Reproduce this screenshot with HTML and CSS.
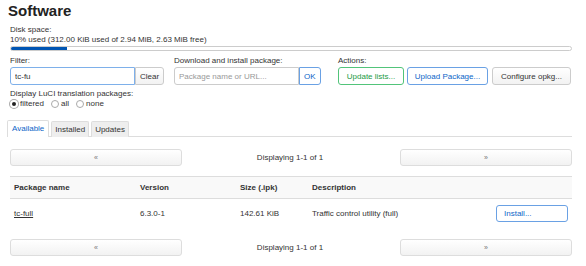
FILE: index.html
```html
<!DOCTYPE html>
<html lang="en">
<head>
    <meta charset="UTF-8">
    <title>Software</title>
    <link rel="stylesheet" href="styles.css">
</head>
<body>
    <div class="page">
        <h1>Software</h1>
        <div class="disk">
            <div>Disk space:</div>
            <div>10% used (312.00 KiB used of 2.94 MiB, 2.63 MiB free)</div>
            <div class="bar"><div class="bar-fill" style="width: 10%"></div></div>
        </div>

        <div class="controls">
            <div class="control filter">
                <label>Filter:</label>
                <div class="input-group">
                    <input type="text" value="tc-fu" class="focus">
                    <button class="btn">Clear</button>
                </div>
            </div>
            <div class="control download">
                <label>Download and install package:</label>
                <div class="input-group">
                    <input type="text" placeholder="Package name or URL...">
                    <button class="btn btn-blue">OK</button>
                </div>
            </div>
            <div class="control actions">
                <label>Actions:</label>
                <div class="button-group">
                    <button class="btn btn-green w-update">Update lists...</button>
                    <button class="btn btn-blue w-upload">Upload Package...</button>
                    <button class="btn w-config">Configure opkg...</button>
                </div>
            </div>
        </div>

        <div class="lang">
            <div>Display LuCI translation packages:</div>
            <div class="radios">
                <span class="radio checked"></span><span class="opt">filtered</span>
                <span class="radio"></span><span class="opt">all</span>
                <span class="radio"></span><span class="opt">none</span>
            </div>
        </div>

        <ul class="tabs">
            <li class="active">Available</li>
            <li>Installed</li>
            <li>Updates</li>
        </ul>

        <div class="pager">
            <button class="btn">&laquo;</button>
            <span>Displaying 1-1 of 1</span>
            <button class="btn">&raquo;</button>
        </div>

        <table class="packages">
            <tr>
                <th class="c-name">Package name</th>
                <th class="c-ver">Version</th>
                <th class="c-size">Size (.ipk)</th>
                <th class="c-desc">Description</th>
                <th></th>
            </tr>
            <tr>
                <td><a href="#">tc-full</a></td>
                <td>6.3.0-1</td>
                <td>142.61 KiB</td>
                <td>Traffic control utility (full)</td>
                <td class="c-btn"><button class="btn btn-blue install">Install...</button></td>
            </tr>
        </table>

        <div class="pager">
            <button class="btn">&laquo;</button>
            <span>Displaying 1-1 of 1</span>
            <button class="btn">&raquo;</button>
        </div>
    </div>
</body>
</html>
```

FILE: styles.css
```css
body {
    margin: 0;
    font-family: "Liberation Sans", Arial, sans-serif;
    font-size: 8px;
    color: #333;
    background: #fff;
}
.page {
    width: 562px;
    padding: 0 14px 0 10px;
}
h1 {
    font-size: 15px;
    font-weight: bold;
    color: #222;
    margin: 0 0 0 -2px;
    height: 25px;
    line-height: 21px;
}
.disk {
    line-height: 10px;
}
.bar {
    height: 3px;
    margin-top: 1px;
    border: 1px solid #ccc;
    border-radius: 3px;
    background: #fff;
    overflow: hidden;
}
.bar-fill {
    height: 100%;
    background: #0055b3;
}
.controls {
    display: flex;
    margin-top: 5px;
}
.control label {
    display: block;
    height: 10px;
    line-height: 10px;
    margin-bottom: 1px;
}
.filter { width: 164px; }
.download { width: 164px; }
.input-group {
    display: flex;
    height: 18px;
}
input {
    font-family: inherit;
    font-size: 8px;
    width: 125px;
    box-sizing: border-box;
    height: 18px;
    padding: 0 4px;
    border: 1px solid #ccc;
    border-radius: 3px 0 0 3px;
    color: #333;
}
input::placeholder { color: #999; }
input.focus { border-color: #7eb0ea; }
.btn {
    font-family: inherit;
    font-size: 8px;
    height: 18px;
    padding: 0 4px;
    background: linear-gradient(#fff, #f2f2f2);
    border: 1px solid #ccc;
    border-radius: 3px;
    color: #333;
    white-space: nowrap;
}
.input-group .btn {
    border-radius: 0 3px 3px 0;
    margin-left: 0;
}
.btn-blue {
    border-color: #6aa1e4;
    color: #0c65c8;
    background: #fff;
}
.btn-green {
    border-color: #52c47a;
    color: #1b9b45;
    background: #fff;
}
.button-group {
    display: flex;
    gap: 3px;
}
.w-update { width: 66px; }
.w-upload { width: 81px; }
.w-config { width: 79px; margin-left: 1px; }
.lang {
    margin-top: 4px;
    line-height: 10px;
}
.radios {
    display: flex;
    align-items: center;
}
.radio {
    display: inline-block;
    width: 8px;
    height: 8px;
    border: 1px solid #aaa;
    border-radius: 50%;
    box-sizing: border-box;
    margin: 0 2px 0 7px;
}
.radio:first-child { margin-left: 0; }
.radio.checked {
    border: 2px solid #fff;
    background: #222;
    box-shadow: 0 0 0 1px #aaa;
}
.tabs {
    list-style: none;
    margin: 11px 0 0 -3px;
    padding: 0;
    display: flex;
    gap: 2px;
    border-bottom: 1px solid #ddd;
    height: 16px;
}
.tabs li {
    height: 15px;
    line-height: 15px;
    padding: 0 3px;
    margin-top: 1px;
    background: #eee;
    border: 1px solid #ddd;
    border-bottom: none;
    border-radius: 2px 2px 0 0;
    color: #333;
}
.tabs li.active {
    background: #fff;
    color: #0c65c8;
    height: 16px;
    margin-top: 0;
    padding: 0 4px;
}
.pager {
    display: flex;
    align-items: center;
    justify-content: space-between;
    margin-top: 12px;
}
.pager .btn {
    width: 172px;
    height: 17px;
    color: #777;
    font-size: 7px;
    border-color: #ddd;
}
.pager span { padding-right: 2px; }
.packages {
    width: 562px;
    table-layout: fixed;
    border-collapse: collapse;
    margin-top: 10px;
}
.packages th,
.packages td {
    box-sizing: border-box;
    padding: 0 4px;
}
.packages th {
    text-align: left;
    font-weight: bold;
    color: #333;
    height: 22px;
    background: #f9f9f9;
    border-top: 1px solid #ddd;
    border-bottom: 1px solid #ddd;
}
.packages td {
    height: 30px;
}
.c-name { width: 126px; }
.c-ver { width: 100px; }
.c-size { width: 72px; }
.c-desc { width: 180px; }
.packages a {
    color: #333;
    text-decoration: underline;
}
.c-btn { text-align: right; }
.install {
    width: 72px;
    height: 17px;
    text-align: left;
    padding-left: 7px;
}
.packages + .pager { margin-top: 10px; }
```
